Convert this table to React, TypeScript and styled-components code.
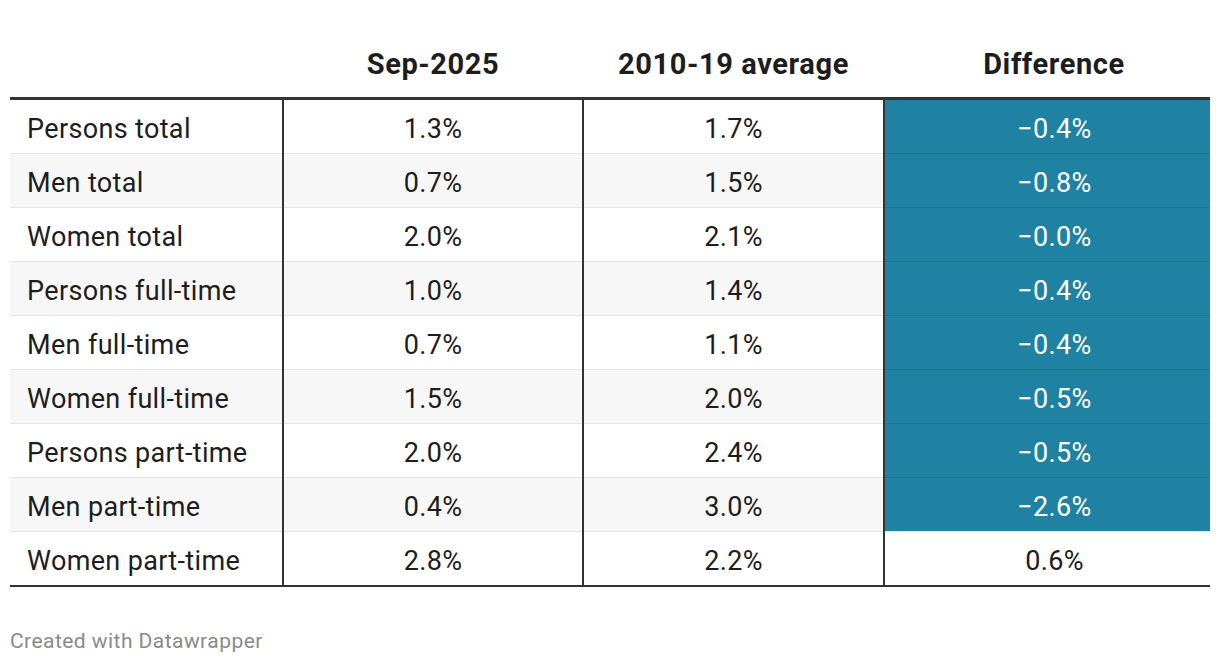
import { createGlobalStyle, styled } from "styled-components";

const GlobalStyle = createGlobalStyle`
  body {
    margin: 0;
    background: #ffffff;
    font-family: Roboto, "Liberation Sans", sans-serif;
    color: #1d1d1d;
  }
`;

const Page = styled.div`
  padding: 0 10px;
`;

const Table = styled.table`
  width: 1200px;
  border-collapse: collapse;
  table-layout: fixed;
  border-bottom: 2px solid #333333;
`;

const HeadCell = styled.th<{ $shift?: boolean }>`
  height: 98px;
  padding: 0 0 16px ${(p) => (p.$shift ? "14px" : "0")};
  vertical-align: bottom;
  text-align: center;
  font-size: 29px;
  line-height: 34px;
  letter-spacing: 0.6px;
  font-weight: 700;
  color: #1d1d1d;
  border-bottom: 3px solid #333333;
  box-sizing: border-box;
`;

const Row = styled.tr<{ $striped: boolean }>`
  background: ${(p) => (p.$striped ? "#f7f7f7" : "#ffffff")};
  border-top: 1px solid #e5e5e5;

  &:first-child {
    border-top: none;
  }
`;

const LabelCell = styled.td`
  height: 48px;
  padding: 5px 17px 0;
  font-size: 27px;
  letter-spacing: 0.35px;
  text-align: left;
  border-right: 2px solid #333333;
`;

const ValueCell = styled.td<{ $divider?: boolean; $highlight?: boolean; $shift?: boolean }>`
  height: 48px;
  padding: 5px 0 0 ${(p) => (p.$shift ? "14px" : "0")};
  font-size: 27px;
  letter-spacing: 0.35px;
  text-align: center;
  border-right: ${(p) => (p.$divider ? "2px solid #333333" : "none")};
  border-top: ${(p) => (p.$highlight ? "1px solid #1b7592" : "none")};
  background: ${(p) => (p.$highlight ? "#1f82a2" : "transparent")};
  color: ${(p) => (p.$highlight ? "#ffffff" : "#1d1d1d")};
`;

const Footer = styled.div`
  margin-top: 42px;
  font-size: 21px;
  letter-spacing: 0.45px;
  color: #8a8a8a;
`;

interface IRow {
  label: string;
  current: string;
  average: string;
  diff: string;
}

const rows: IRow[] = [
  { label: "Persons total", current: "1.3%", average: "1.7%", diff: "−0.4%" },
  { label: "Men total", current: "0.7%", average: "1.5%", diff: "−0.8%" },
  { label: "Women total", current: "2.0%", average: "2.1%", diff: "−0.0%" },
  { label: "Persons full-time", current: "1.0%", average: "1.4%", diff: "−0.4%" },
  { label: "Men full-time", current: "0.7%", average: "1.1%", diff: "−0.4%" },
  { label: "Women full-time", current: "1.5%", average: "2.0%", diff: "−0.5%" },
  { label: "Persons part-time", current: "2.0%", average: "2.4%", diff: "−0.5%" },
  { label: "Men part-time", current: "0.4%", average: "3.0%", diff: "−2.6%" },
  { label: "Women part-time", current: "2.8%", average: "2.2%", diff: "0.6%" },
];

function App() {
  return (
    <Page>
      <GlobalStyle />
      <Table>
        <colgroup>
          <col style={{ width: 273 }} />
          <col style={{ width: 300 }} />
          <col style={{ width: 301 }} />
          <col style={{ width: 326 }} />
        </colgroup>
        <thead>
          <tr>
            <HeadCell></HeadCell>
            <HeadCell>Sep-2025</HeadCell>
            <HeadCell>2010-19 average</HeadCell>
            <HeadCell $shift>Difference</HeadCell>
          </tr>
        </thead>
        <tbody>
          {rows.map((row, i) => (
            <Row key={row.label} $striped={i % 2 === 1}>
              <LabelCell>{row.label}</LabelCell>
              <ValueCell $divider>{row.current}</ValueCell>
              <ValueCell $divider>{row.average}</ValueCell>
              <ValueCell $shift $highlight={row.diff.startsWith("−")}>
                {row.diff}
              </ValueCell>
            </Row>
          ))}
        </tbody>
      </Table>
      <Footer>Created with Datawrapper</Footer>
    </Page>
  );
}

export default App;
